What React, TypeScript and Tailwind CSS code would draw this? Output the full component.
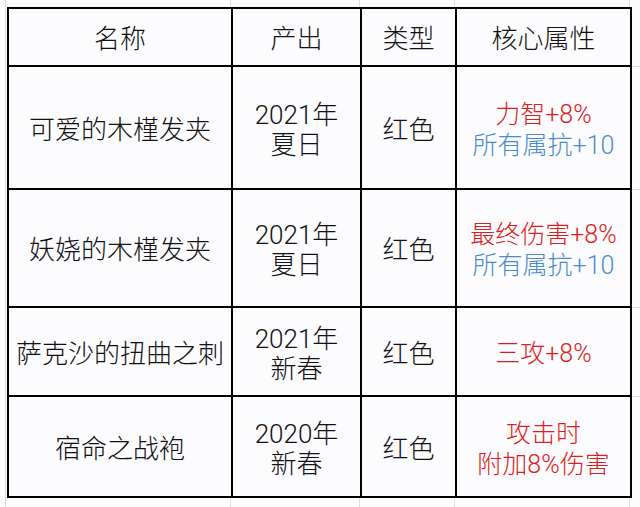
import React from "react";

const COLS = "grid-cols-[224px_129px_95px_175px]";
const RED = "text-[#dd1d20]";
const BLUE = "text-[#4a8cca]";
const MIXED = { fontFamily: 'Roboto, "Noto Sans CJK SC", sans-serif' };

type Row = {
  name: string;
  year: string;
  season: string;
  type: string;
  attrs: { text: string; color: string }[];
  h: string;
};

const rows: Row[] = [
  {
    name: "可爱的木槿发夹",
    year: "2021年",
    season: "夏日",
    type: "红色",
    attrs: [
      { text: "力智+8%", color: RED },
      { text: "所有属抗+10", color: BLUE },
    ],
    h: "h-[123px]",
  },
  {
    name: "妖娆的木槿发夹",
    year: "2021年",
    season: "夏日",
    type: "红色",
    attrs: [
      { text: "最终伤害+8%", color: RED },
      { text: "所有属抗+10", color: BLUE },
    ],
    h: "h-[118px]",
  },
  {
    name: "萨克沙的扭曲之刺",
    year: "2021年",
    season: "新春",
    type: "红色",
    attrs: [{ text: "三攻+8%", color: RED }],
    h: "h-[89px]",
  },
  {
    name: "宿命之战袍",
    year: "2020年",
    season: "新春",
    type: "红色",
    attrs: [
      { text: "攻击时", color: RED },
      { text: "附加8%伤害", color: RED },
    ],
    h: "h-[101px]",
  },
];

function Cell({ children, className = "" }: { children?: React.ReactNode; className?: string }) {
  return (
    <div
      className={
        "flex flex-col items-center justify-center text-center border-r-2 border-b-2 border-black leading-[30px] " +
        className
      }
    >
      {children}
    </div>
  );
}

function Strip({ className = "" }: { className?: string }) {
  return (
    <div className={"grid grid-cols-[6px_225px_129px_95px_175px_1fr] " + className}>
      <div className="border-r border-[#dcdcdc]" />
      <div className="border-r border-[#dcdcdc]" />
      <div className="border-r border-[#dcdcdc]" />
      <div className="border-r border-[#dcdcdc]" />
      <div className="border-r border-[#dcdcdc]" />
      <div />
    </div>
  );
}

export default function App() {
  return (
    <div
      className="w-[640px] h-[507px] bg-[#fcfbfd] flex flex-col overflow-hidden text-[26px] font-light text-[#111]"
      style={{ fontFamily: '"Noto Sans CJK SC", sans-serif' }}
    >
      <Strip className="h-[7px]" />
      <div className="flex">
        <div className="w-[7px] flex">
          <div className="w-[6px] border-r border-[#dcdcdc]" />
        </div>
        <div className={"grid " + COLS + " border-l-2 border-t-2 border-black"}>
          <Cell className="h-[58px]">名称</Cell>
          <Cell className="h-[58px]">产出</Cell>
          <Cell className="h-[58px]">类型</Cell>
          <Cell className="h-[58px]">核心属性</Cell>
          {rows.map((r) => (
            <React.Fragment key={r.name}>
              <Cell className={r.h}>{r.name}</Cell>
              <Cell className={r.h + " pt-[4px]"}>
                <span style={MIXED}>{r.year}</span>
                <span style={MIXED}>{r.season}</span>
              </Cell>
              <Cell className={r.h}>{r.type}</Cell>
              <Cell className={r.h + " pt-[4px] text-[25px] leading-[31px]"}>
                {r.attrs.map((a) => (
                  <span key={a.text} className={a.color} style={MIXED}>
                    {a.text}
                  </span>
                ))}
              </Cell>
            </React.Fragment>
          ))}
        </div>
        <div className="flex-1 flex flex-col">
          <div className="h-[60px] border-b border-[#dcdcdc]" />
          <div className="h-[123px] border-b border-[#dcdcdc]" />
          <div className="h-[118px] border-b border-[#dcdcdc]" />
          <div className="h-[89px] border-b border-[#dcdcdc]" />
          <div className="h-[101px]" />
        </div>
      </div>
      <Strip className="flex-1" />
    </div>
  );
}
